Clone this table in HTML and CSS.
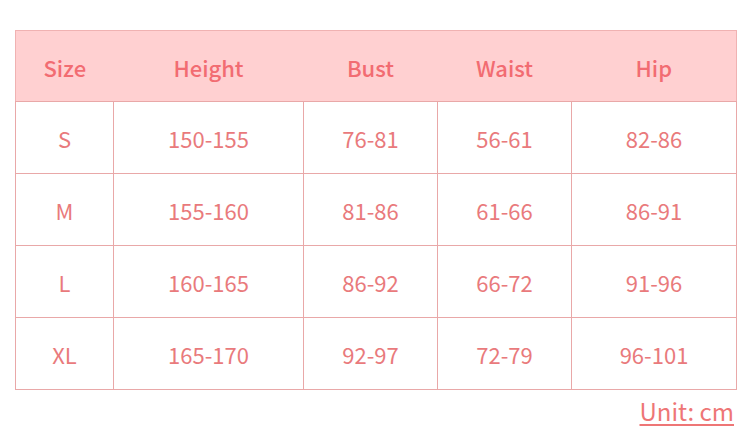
FILE: index.html
```html
<!DOCTYPE html>
<html>
<head>
<meta charset="utf-8">
<link rel="stylesheet" href="styles.css">
</head>
<body>
<div class="page">
  <table class="size-table">
    <colgroup>
      <col class="c1"><col class="c2"><col class="c3"><col class="c4"><col class="c5">
    </colgroup>
    <thead>
      <tr><th>Size</th><th>Height</th><th>Bust</th><th>Waist</th><th>Hip</th></tr>
    </thead>
    <tbody>
      <tr><td>S</td><td>150-155</td><td>76-81</td><td>56-61</td><td>82-86</td></tr>
      <tr><td>M</td><td>155-160</td><td>81-86</td><td>61-66</td><td>86-91</td></tr>
      <tr><td>L</td><td>160-165</td><td>86-92</td><td>66-72</td><td>91-96</td></tr>
      <tr><td>XL</td><td>165-170</td><td>92-97</td><td>72-79</td><td>96-101</td></tr>
    </tbody>
  </table>
  <div class="unit"><span class="unit-text">Unit: cm</span></div>
</div>
</body>
</html>
```
FILE: styles.css
```css
html, body {
  margin: 0;
  padding: 0;
  background: #ffffff;
}
.page {
  padding: 30px 15px 0 15px;
  width: 720px;
  font-family: "Noto Sans CJK SC", "Noto Sans", sans-serif;
}
.size-table {
  width: 721px;
  border-collapse: collapse;
  table-layout: fixed;
}
.c1 { width: 98px; }
.c2 { width: 190px; }
.c3 { width: 134px; }
.c4 { width: 134px; }
.c5 { width: 165px; }
.size-table th {
  background: #ffd0d1;
  color: #f26c72;
  font-weight: 500;
  font-size: 22px;
  line-height: 30px;
  height: 68px;
  padding: 2px 0 0 0;
  border-top: 1px solid #f0b2b2;
  border-bottom: 1px solid #e9a8a8;
  text-align: center;
}
.size-table th:first-child { border-left: 1px solid #f0b2b2; }
.size-table th:last-child { border-right: 1px solid #f0b2b2; }
.size-table td {
  color: #e97a7c;
  font-size: 22px;
  line-height: 30px;
  font-weight: 400;
  height: 70px;
  padding: 1px 0 0 0;
  border: 1px solid #e9a8a8;
  text-align: center;
}
.unit {
  display: flex;
  justify-content: flex-end;
  width: 719px;
  margin-top: 6px;
}
.unit-text {
  color: #ee7676;
  font-size: 24px;
  line-height: 30px;
  text-decoration: underline;
  text-decoration-thickness: 2px;
  text-underline-offset: 3px;
}
```
